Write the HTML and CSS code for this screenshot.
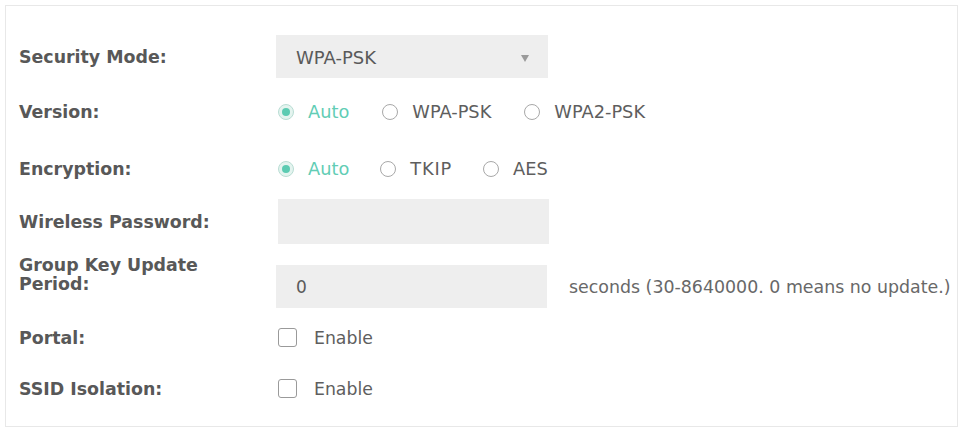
FILE: index.html
```html
<!DOCTYPE html>
<html>
<head>
<meta charset="utf-8">
<link rel="stylesheet" href="styles.css">
</head>
<body>
<div class="panel">
  <div class="row r1">
    <div class="label">Security Mode:</div>
    <div class="select"><span>WPA-PSK</span><span class="caret"></span></div>
  </div>
  <div class="row r2">
    <div class="label">Version:</div>
    <div class="opts ver">
      <span class="opt on"><span class="radio"></span>Auto</span>
      <span class="opt"><span class="radio"></span>WPA-PSK</span>
      <span class="opt"><span class="radio"></span>WPA2-PSK</span>
    </div>
  </div>
  <div class="row r3">
    <div class="label">Encryption:</div>
    <div class="opts">
      <span class="opt on"><span class="radio"></span>Auto</span>
      <span class="opt wide"><span class="radio"></span>TKIP</span>
      <span class="opt"><span class="radio"></span>AES</span>
    </div>
  </div>
  <div class="row r4">
    <div class="label">Wireless Password:</div>
    <div class="input"></div>
  </div>
  <div class="row r5">
    <div class="label two">Group Key Update<br>Period:</div>
    <div class="input">0</div>
    <div class="hint">seconds (30-8640000. 0 means no update.)</div>
  </div>
  <div class="row r6">
    <div class="label">Portal:</div>
    <span class="opt chk"><span class="check"></span>Enable</span>
  </div>
  <div class="row r7">
    <div class="label">SSID Isolation:</div>
    <span class="opt chk"><span class="check"></span>Enable</span>
  </div>
</div>
</body>
</html>
```

FILE: styles.css
```css
html, body {
  margin: 0;
  padding: 0;
  background: #ffffff;
}
body {
  width: 959px;
  height: 429px;
  overflow: hidden;
}
.panel {
  margin: 5px 0 0 5px;
  width: 951px;
  height: 420px;
  border: 1px solid #e8e8e8;
}
.row {
  display: flex;
  align-items: center;
  height: 44px;
  padding-left: 13px;
}
.r1 { margin-top: 29px; height: 43px; }
.r2 { margin-top: 11px; }
.r3 { margin-top: 13px; }
.r4 { margin-top: 9px; height: 45px; }
.r5 { margin-top: 21px; height: 43px; }
.r6 { margin-top: 7px; }
.r7 { margin-top: 7px; }
.label {
  width: 257px;
  flex: none;
  font-family: "DejaVu Sans", Verdana, sans-serif;
  font-weight: bold;
  font-size: 17.4px;
  color: #585858;
  padding-top: 1px;
}
.label.two {
  line-height: 19px;
  align-self: flex-start;
  margin-top: -9px;
  padding-top: 0;
}
.select {
  width: 272px;
  height: 43px;
  background: #eeeeee;
  display: flex;
  align-items: center;
  justify-content: space-between;
  padding: 1px 19px 0 20px;
  box-sizing: border-box;
  font-family: "DejaVu Sans", Verdana, sans-serif;
  font-size: 18px;
  color: #5a5a5a;
}
.caret {
  width: 0;
  height: 0;
  border-left: 4.5px solid transparent;
  border-right: 4.5px solid transparent;
  border-top: 7px solid #9a9a9a;
  margin-top: 2px;
}
.opts {
  display: flex;
  align-items: center;
  gap: 31px;
  padding-top: 1px;
}
.opts.ver { gap: 33px; }
.opt {
  display: inline-flex;
  align-items: center;
  font-family: "DejaVu Sans", Verdana, sans-serif;
  font-size: 17.8px;
  color: #5e5e5e;
}
.opt.chk { font-size: 17.3px; padding-top: 1px; }
.opt.on { color: #62cdb5; }
.opt.wide { letter-spacing: 0.8px; }
.opts .opt:first-child { margin-left: 2px; }
.radio {
  width: 16px;
  height: 16px;
  border: 1px solid #a8a8a8;
  border-radius: 50%;
  box-sizing: border-box;
  margin-right: 14px;
  position: relative;
  flex: none;
}
.on .radio {
  border-color: #b9ddd4;
  background: #e4f4ef;
}
.on .radio::after {
  content: "";
  position: absolute;
  left: 3px;
  top: 3px;
  width: 8px;
  height: 8px;
  border-radius: 50%;
  background: #5ccbb2;
}
.input {
  width: 271px;
  height: 100%;
  background: #eeeeee;
  flex: none;
  box-sizing: border-box;
  padding: 1px 0 0 20px;
  display: flex;
  align-items: center;
  font-family: "DejaVu Sans", Verdana, sans-serif;
  font-size: 17px;
  color: #5a5a5a;
}
.r4 .input { margin-left: 2px; }
.hint {
  margin-left: 22px;
  padding-top: 1px;
  font-family: "DejaVu Sans", Verdana, sans-serif;
  font-size: 17.4px;
  color: #686868;
  white-space: nowrap;
}
.check {
  width: 19px;
  height: 19px;
  border: 1.5px solid #9a9a9a;
  border-radius: 3px;
  box-sizing: border-box;
  margin-right: 17px;
  margin-left: 2px;
  flex: none;
}
```
